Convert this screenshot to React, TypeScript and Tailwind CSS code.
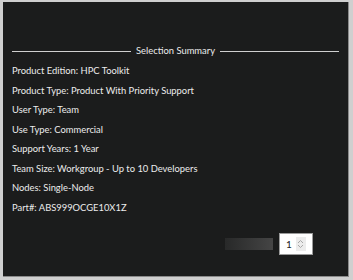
import React from "react";

const rows = [
  "Product Edition: HPC Toolkit",
  "Product Type: Product With Priority Support",
  "User Type: Team",
  "Use Type: Commercial",
  "Support Years: 1 Year",
  "Team Size: Workgroup - Up to 10 Developers",
  "Nodes: Single-Node",
  "Part#: ABS999OCGE10X1Z",
];

export default function App() {
  return (
    <div className="w-[353px] h-[280px] bg-[#cfcfcf] pl-[3px] pt-[2px] pr-[4px] pb-[3px]" style={{ fontFamily: "Lato, 'Open Sans', sans-serif" }}>
      <div className="w-full h-full bg-[#1b1c1c] border-r border-b border-[#8a8a8a] flex flex-col pt-[39px] px-[9px] text-[#ececec]">
        <div className="flex items-center h-[20px] gap-[5px]">
          <div className="flex-1 h-px bg-[#cfcfcf]" />
          <div className="text-[9.4px]">Selection Summary</div>
          <div className="flex-1 h-px bg-[#cfcfcf]" />
        </div>
        <div className="flex flex-col">
          {rows.map((r) => (
            <div key={r} className="h-[19.5px] leading-[19.5px] text-[9.4px]">
              {r}
            </div>
          ))}
        </div>
        <div className="flex items-center justify-end mt-[16px] pr-[26px] gap-[6px]">
          <div className="w-[48px] h-[12px] bg-gradient-to-r from-[#282929] to-[#454545]" />
          <div className="w-[34px] h-[22px] bg-white border border-[#9a9a9a] flex items-center pl-[6px] gap-[4px]">
            <span className="text-[10px] text-[#222] leading-none">1</span>
            <div className="w-[10px] h-[14px] bg-[#ececec] flex flex-col items-center justify-center">
              <svg width="7" height="12" viewBox="0 0 7 12" fill="none" stroke="#a8a8a8" strokeWidth="1">
                <path d="M1 5 L3.5 2.5 L6 5" />
                <path d="M1 7 L3.5 9.5 L6 7" />
              </svg>
            </div>
          </div>
        </div>
      </div>
    </div>
  );
}
